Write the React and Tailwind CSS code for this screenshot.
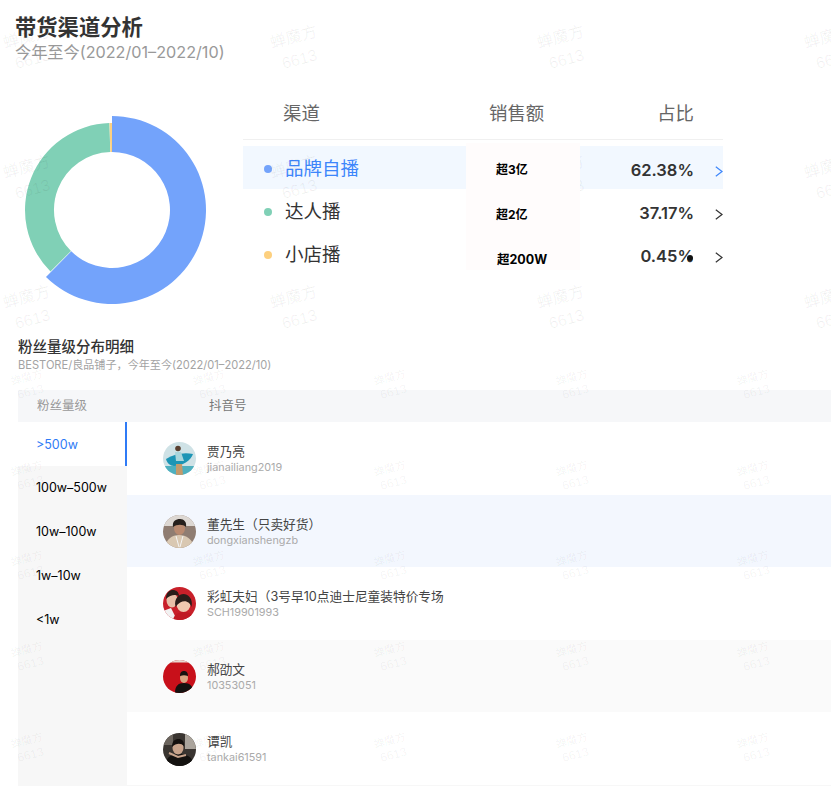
const sans = "font-['Inter','Noto_Sans_CJK_SC',sans-serif]";

function Wm({ className, cols, rows, children }) {
  return (
    <div className={`absolute pointer-events-none overflow-hidden font-['Liberation_Sans','Noto_Sans_CJK_SC',sans-serif] ${className}`}>
      {Array.from({ length: cols * rows }).map((_, i) => (
        <div key={i} className="float-left">{children}</div>
      ))}
    </div>
  );
}

function Chevron({ color }) {
  return (
    <svg width="8" height="11" viewBox="0 0 8 11" className="shrink-0">
      <path d="M0.8 0.8 L7 5.5 L0.8 10.2" fill="none" stroke={color} strokeWidth="1.2" />
    </svg>
  );
}

function polar(r, deg) {
  const a = (deg * Math.PI) / 180;
  return [95 + r * Math.sin(a), 95 - r * Math.cos(a)];
}
function arc(ro, ri, a0, a1) {
  const [x0, y0] = polar(ro, a0);
  const [x1, y1] = polar(ro, a1);
  const [x2, y2] = polar(ri, a1);
  const [x3, y3] = polar(ri, a0);
  const large = a1 - a0 > 180 ? 1 : 0;
  return `M${x0} ${y0}A${ro} ${ro} 0 ${large} 1 ${x1} ${y1}L${x2} ${y2}A${ri} ${ri} 0 ${large} 0 ${x3} ${y3}Z`;
}

function Donut() {
  return (
    <svg width="190" height="190" viewBox="0 0 190 190" className="shrink-0">
      <path d={arc(94, 58, 0, 224.6)} fill="#73a3fb" />
      <path d={arc(87, 58, 225, 358.3)} fill="#80d0b6" />
      <path d={arc(87, 58, 358.4, 360)} fill="#fdd07f" />
    </svg>
  );
}

const channels = [
  { name: "品牌自播", pct: "62.38%", dot: "bg-[#73a3fb]", text: "text-[#3d86fb]", bg: "bg-[#f2f8ff]", arrow: "#3d86fb" },
  { name: "达人播", pct: "37.17%", dot: "bg-[#80d0b6]", text: "text-[#333333]", bg: "", arrow: "#333333" },
  { name: "小店播", pct: "0.45%", dot: "bg-[#fdd07f]", text: "text-[#333333]", bg: "", arrow: "#333333" },
];

function Av0() {
  return (
    <svg viewBox="0 0 33 33" className="w-[33px] h-[33px] rounded-full shrink-0">
      <rect width="33" height="33" fill="#cfe2e6" />
      <rect y="24" width="33" height="9" fill="#4fb0bf" />
      <path d="M3 17c8-5 18-7 27-5-2 6-10 12-19 12-4 0-7-3-8-7z" fill="#1d95b5" />
      <circle cx="15" cy="6.500" r="2.800" fill="#5a4030" />
      <path d="M12 10h6l3 9h-8z" fill="#a9d6dc" />
      <path d="M13 22h6l1 11h-7z" fill="#c49a6c" />
    </svg>
  );
}
function Av1() {
  return (
    <svg viewBox="0 0 33 33" className="w-[33px] h-[33px] rounded-full shrink-0">
      <rect width="33" height="33" fill="#8f7d72" />
      <rect width="33" height="11" fill="#ddd8d3" />
      <path d="M2 33c1-9 7-13 14-13s14 4 15 13z" fill="#d9c8b2" />
      <ellipse cx="16.500" cy="13" rx="5.500" ry="7" fill="#b98a70" />
      <path d="M10 12c-1-6 3-8 7-8s7 3 6 8c-3-3-9-3-13 0z" fill="#26201d" />
      <path d="M13 21l3 11M20 21l-3 11" stroke="#f4f4f4" strokeWidth="1" />
    </svg>
  );
}
function Av2() {
  return (
    <svg viewBox="0 0 33 33" className="w-[33px] h-[33px] rounded-full shrink-0">
      <rect width="33" height="33" fill="#c8202a" />
      <ellipse cx="9" cy="13" rx="5.500" ry="7.500" fill="#e8bfa8" />
      <path d="M3 12c0-7 4-9 7-9s6 2 6 6c-4-2-9-1-13 3z" fill="#2a1d1a" />
      <path d="M0 33v-9l8-3 6 12z" fill="#f2f2f2" />
      <ellipse cx="20.500" cy="17" rx="7" ry="8" fill="#f0c8b0" />
      <path d="M12.500 20c-2-9 4-13 8-13s10 4 8 13c-2-6-9-9-16 0z" fill="#2a1d1a" />
      <path d="M10 33c1-6 6-8 11-8s9 2 10 8z" fill="#c01a24" />
    </svg>
  );
}
function Av3() {
  return (
    <svg viewBox="0 0 33 33" className="w-[33px] h-[33px] rounded-full shrink-0">
      <rect width="33" height="33" fill="#c8101a" />
      <rect width="33" height="2.500" fill="#e8d8d0" />
      <path d="M12 33c0-7 3-10 9-10s9 3 10 10z" fill="#15110f" />
      <ellipse cx="21" cy="18" rx="4" ry="5" fill="#d9a582" />
      <path d="M17 16c0-4 2-5 4-5s4 1 4 5c-3-1-5-1-8 0z" fill="#15110f" />
    </svg>
  );
}
function Av4() {
  return (
    <svg viewBox="0 0 33 33" className="w-[33px] h-[33px] rounded-full shrink-0">
      <rect width="33" height="33" fill="#3a3531" />
      <rect x="22" width="11" height="16" fill="#aaa49c" />
      <rect width="10" height="12" fill="#6c655e" />
      <path d="M2 33c1-9 6-12 14-12s14 3 15 12z" fill="#141210" />
      <ellipse cx="15" cy="15" rx="5.500" ry="6.500" fill="#c9a48c" />
      <path d="M9 14c0-6 3-8 6.500-8s6 2.500 5.500 7c-3-3-8-3-12 1z" fill="#14100e" />
      <path d="M6 20l9 4 8-2" fill="none" stroke="#c9a48c" strokeWidth="2" />
    </svg>
  );
}

const people = [
  { name: "贾乃亮", id: "jianailiang2019", Av: Av0, cls: "h-[73px]" },
  { name: "董先生（只卖好货）", id: "dongxianshengzb", Av: Av1, cls: "h-[72px] pt-[1px] bg-[#f3f7fe]" },
  { name: "彩虹夫妇（3号早10点迪士尼童装特价专场", id: "SCH19901993", Av: Av2, cls: "h-[73px]" },
  { name: "郝劭文", id: "10353051", Av: Av3, cls: "h-[72px] pt-[1px] bg-[#fafafa]" },
  { name: "谭凯", id: "tankai61591", Av: Av4, cls: "h-[73px] pt-[1px]" },
];

const levels = [">500w", "100w–500w", "10w–100w", "1w–10w", "<1w"];

export default function App() {
  return (
    <div className={`relative w-[831px] h-[792px] overflow-hidden bg-white ${sans}`}>
      <div className="pl-[15px] pt-[13px]">
        <div className="text-[21.3px] leading-[28px] font-semibold text-[#333333]">带货渠道分析</div>
        <div className="text-[16.2px] leading-[22px] text-[#999999]">今年至今(2022/01–2022/10)</div>
      </div>

      <div className="flex pl-[17px] h-[274px] pt-[25px]">
        <div className="pt-[27px]">
          <Donut />
        </div>
        <div className="relative ml-[36px] w-[480px]">
          <div className="flex items-center h-[52px] border-b border-[#f0f0f0] text-[18.4px] text-[#666666]">
            <span className="ml-[40px] w-[206px]">渠道</span>
            <span>销售额</span>
            <span className="ml-auto mr-[29px]">占比</span>
          </div>
          <div className="mt-[6px]">
            {channels.map((c) => (
              <div key={c.name} className={`flex items-center h-[43px] pl-[21px] ${c.bg}`}>
                <span className={`mt-[2px] w-[8px] h-[8px] rounded-full ${c.dot}`} />
                <span className={`ml-[13px] pt-[2px] text-[18.5px] ${c.text}`}>{c.name}</span>
                <span className="relative ml-auto mr-[21px] pt-[6px] text-[16.500px] font-semibold text-[#333333]">
                  {c.pct}
                  {c.pct === "0.45%" && (
                    <span className="absolute right-[1px] top-[17px] w-[6px] h-[6px] rounded-full bg-[#111111]" />
                  )}
                </span>
                <span className="pt-[8px]">
                  <Chevron color={c.arrow} />
                </span>
              </div>
            ))}
          </div>
          {/* opaque panel that lies over the sales column */}
          <div className="absolute left-[223px] top-[55px] z-20 w-[114px] h-[127px] bg-[#fffcfc] pt-[4px] pl-[30px] text-[12px] font-bold text-black">
            <div className="h-[45px] leading-[45px]">超3亿</div>
            <div className="h-[45px] leading-[45px]">超2亿</div>
            <div className="h-[45px] leading-[45px] pl-[1px] text-[12.500px]">超200W</div>
          </div>
        </div>
      </div>

      <div className="pl-[18px]">
        <div className="text-[14.500px] leading-[20px] font-medium text-[#333333]">粉丝量级分布明细</div>
        <div className="text-[11.100px] leading-[16px] text-[#a3a3a3]">BESTORE/良品铺子，今年至今(2022/01–2022/10)</div>
        <div className="mt-[17px] flex items-center h-[32px] bg-[#f6f7f9] text-[12.500px]">
          <span className="ml-[19px] w-[172px] text-[#999999]">粉丝量级</span>
          <span className="text-[#777777]">抖音号</span>
        </div>
        <div className="flex h-[364px] border-b border-[#f7f7f7]">
          <div className="w-[109px] shrink-0 bg-[#f7f7f7] text-[12.500px] text-black">
            {levels.map((l, i) => (
              <div
                key={l}
                className={`flex items-center h-[43.75px] pl-[18px] pt-[2px] ${i === 0 ? "bg-white text-[#2f7bf6] border-r-2 border-[#2f7bf6]" : ""}`}
              >
                {l}
              </div>
            ))}
          </div>
          <div className="flex-1">
            {people.map(({ name, id, Av, cls }) => (
              <div key={id} className={`flex items-center pl-[36px] ${cls}`}>
                <Av />
                <div className="ml-[11px]">
                  <div className="text-[12.700px] leading-[17px] text-[#444444]">{name}</div>
                  <div className="text-[10.800px] leading-[15px] text-[#aaaaaa]">{id}</div>
                </div>
              </div>
            ))}
          </div>
        </div>
      </div>

      <Wm className="left-[-65px] top-[-31px] w-[900px] h-[361px] z-10" cols={7} rows={6}>
        <div className="w-[133px] h-[66.7px] text-[19px] leading-[25px] text-[#000000]/[0.02]">
          <div>b5cc51</div>
          <div>6613</div>
        </div>
      </Wm>
      <Wm className="left-[-104px] top-[-17px] w-[1068px] h-[347px] z-10" cols={4} rows={3}>
        <div className="w-[267px] h-[130px] flex flex-col items-center justify-center rotate-[-15deg] text-[#000000]/[0.06]">
          <div className="text-[16px] leading-[24px]">蝉魔方</div>
          <div className="text-[16px] leading-[22px]">6613</div>
        </div>
      </Wm>
      <Wm className="left-[-36px] top-[328px] w-[910px] h-[464px] z-10" cols={10} rows={11}>
        <div className="w-[91px] h-[45.5px] text-[13px] leading-[18px] text-[#000000]/[0.02]">
          <div>b4c6f0</div>
          <div>6613</div>
        </div>
      </Wm>
      <Wm className="left-[-62px] top-[340px] w-[1089px] h-[452px] z-10" cols={6} rows={5}>
        <div className="w-[181.5px] h-[90.7px] flex flex-col items-center justify-center rotate-[-15deg] text-[#000000]/[0.05]">
          <div className="text-[11px] leading-[15px]">蝉魔方</div>
          <div className="text-[12px] leading-[15px]">6613</div>
        </div>
      </Wm>
    </div>
  );
}
